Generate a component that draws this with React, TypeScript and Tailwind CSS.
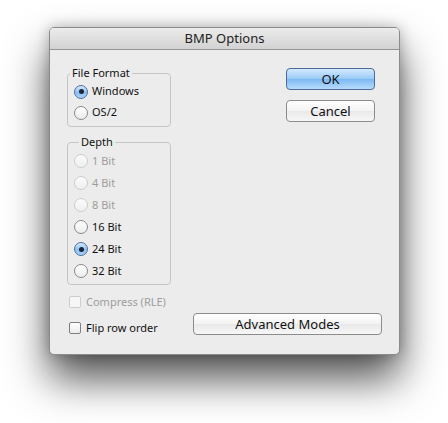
type RadioState = "on" | "off" | "disabled";

function Radio({ state }: { state: RadioState }) {
  if (state === "on") {
    return (
      <span className="flex h-[14px] w-[14px] shrink-0 items-center justify-center rounded-full border border-[#4f6f9e] bg-[linear-gradient(#d6e9fc,#8cc0f4_55%,#a9d2f9)]">
        <span className="h-[5px] w-[5px] rounded-full bg-[#1b2638]" />
      </span>
    );
  }
  return (
    <span
      className={
        state === "disabled"
          ? "h-[14px] w-[14px] shrink-0 rounded-full border border-[#cdcdcd] bg-[linear-gradient(#fbfbfb,#efefef)]"
          : "h-[14px] w-[14px] shrink-0 rounded-full border border-[#8a8a8a] bg-[linear-gradient(#ffffff,#ededed)]"
      }
    />
  );
}

function RadioRow({ label, state, height }: { label: string; state: RadioState; height: string }) {
  return (
    <div className={`flex items-center gap-[4px] pl-[6px] ${height}`}>
      <Radio state={state} />
      <span className={state === "disabled" ? "text-[#9d9d9d]" : "text-[#111]"}>{label}</span>
    </div>
  );
}

function CheckRow({ label, disabled }: { label: string; disabled?: boolean }) {
  return (
    <div className="flex h-[22px] items-center gap-[5px] pl-[2px]">
      <span
        className={
          disabled
            ? "h-[12px] w-[12px] rounded-[2px] border border-[#cdcdcd] bg-[#f6f6f6]"
            : "h-[12px] w-[12px] rounded-[2px] border border-[#7f7f7f] bg-[linear-gradient(#ffffff,#ececec)]"
        }
      />
      <span className={disabled ? "text-[#9d9d9d]" : "text-[#111]"}>{label}</span>
    </div>
  );
}

function MacButton({ label, primary, className }: { label: string; primary?: boolean; className: string }) {
  return (
    <button
      type="button"
      className={`flex items-center justify-center rounded-[4px] border text-[13px] leading-none text-[#111] ${
        primary
          ? "border-[#4d6a98] bg-[linear-gradient(#d5e9fd,#98caf7_50%,#7db9f2_52%,#b8dcfb)]"
          : "border-[#8c8c8c] bg-[linear-gradient(#ffffff,#f3f3f3_50%,#e9e9e9_52%,#f7f7f7)]"
      } ${className}`}
    >
      {label}
    </button>
  );
}

const depths: Array<{ label: string; state: RadioState }> = [
  { label: "1 Bit", state: "disabled" },
  { label: "4 Bit", state: "disabled" },
  { label: "8 Bit", state: "disabled" },
  { label: "16 Bit", state: "off" },
  { label: "24 Bit", state: "on" },
  { label: "32 Bit", state: "off" },
];

export default function App() {
  return (
    <div className="h-[423px] w-[448px] bg-white pl-[49px] pt-[27px] font-['Noto_Sans',sans-serif] text-[11px]">
      <div className="w-[351px] overflow-hidden rounded-[5px] border border-[#8b8b8b] bg-[#ececec] shadow-[0_24px_42px_rgba(0,0,0,0.68),0_0_14px_rgba(0,0,0,0.25)]">
        <div className="flex h-[22px] items-center justify-center border-b border-[#969696] bg-[linear-gradient(#ececec,#d2d2d2)] text-[13px] text-[#222]">
          BMP Options
        </div>

        <div className="px-[17px] pb-[15px]">
          <div className="flex">
            <div className="w-[104px]">
              <fieldset className="mt-[16px] h-[61px] rounded-[4px] border border-[#c5c5c5] pt-[1px]">
                <legend className="ml-[2px] px-[2px] leading-[14px] text-[#111]">File Format</legend>
                <RadioRow label="Windows" state="on" height="h-[21px]" />
                <RadioRow label="OS/2" state="off" height="h-[21px]" />
              </fieldset>

              <fieldset className="mt-[8px] h-[150px] rounded-[4px] border border-[#c5c5c5] pt-[1px]">
                <legend className="ml-[11px] px-[2px] leading-[14px] text-[#111]">Depth</legend>
                {depths.map((d) => (
                  <RadioRow key={d.label} label={d.label} state={d.state} height="h-[22px]" />
                ))}
              </fieldset>
            </div>

            <div className="ml-auto mr-[7px] mt-[18px] flex flex-col gap-[10px]">
              <MacButton label="OK" primary className="h-[22px] w-[89px]" />
              <MacButton label="Cancel" className="h-[22px] w-[89px]" />
            </div>
          </div>

          <div className="mt-[6px]">
            <CheckRow label="Compress (RLE)" disabled />
          </div>
          <div className="flex items-start">
            <div className="mt-[4px]">
              <CheckRow label="Flip row order" />
            </div>
            <MacButton label="Advanced Modes" className="ml-auto h-[22px] w-[189px]" />
          </div>
        </div>
      </div>
    </div>
  );
}
